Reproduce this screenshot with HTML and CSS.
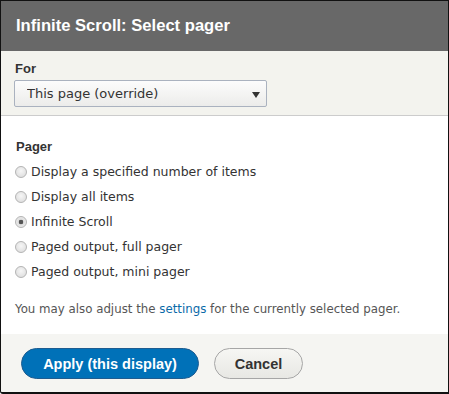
FILE: index.html
```html
<!DOCTYPE html>
<html lang="en">
<head>
    <meta charset="UTF-8">
    <meta name="viewport" content="width=device-width, initial-scale=1.0">
    <title>Infinite Scroll: Select pager</title>
    <link rel="stylesheet" href="styles.css">
</head>
<body>
    <div class="dialog">
        <div class="titlebar">Infinite Scroll: Select pager</div>

        <div class="override">
            <label for="override-for" class="field-label">For</label>
            <div class="select-wrap">
                <select id="override-for" class="select-field">
                    <option>This page (override)</option>
                    <option>All displays</option>
                </select>
                <span class="select-arrow"></span>
            </div>
        </div>

        <form class="content">
            <div class="field-label">Pager</div>
            <label class="radio-row"><input type="radio" name="pager" class="radio"> Display a specified number of items</label>
            <label class="radio-row"><input type="radio" name="pager" class="radio"> Display all items</label>
            <label class="radio-row"><input type="radio" name="pager" class="radio" checked> Infinite Scroll</label>
            <label class="radio-row"><input type="radio" name="pager" class="radio"> Paged output, full pager</label>
            <label class="radio-row"><input type="radio" name="pager" class="radio"> Paged output, mini pager</label>

            <p class="description">You may also adjust the <a href="#" class="link">settings</a> for the currently selected pager.</p>
        </form>

        <div class="buttonpane">
            <button type="button" class="button button-primary">Apply (this display)</button>
            <button type="button" class="button">Cancel</button>
        </div>
    </div>
</body>
</html>
```

FILE: styles.css
```css
body {
    margin: 0;
    font-family: "DejaVu Sans", sans-serif;
    color: #333;
}
.dialog {
    width: 449px;
    height: 394px;
    box-sizing: border-box;
    border: 1px solid #111;
    border-bottom-width: 2px;
    border-bottom-left-radius: 3px;
    display: flex;
    flex-direction: column;
    background-color: #fff;
    overflow: hidden;
}
.titlebar {
    height: 50px;
    line-height: 50px;
    padding-left: 15px;
    background-color: #686868;
    color: #fff;
    font-family: "Liberation Sans", Arial, sans-serif;
    font-weight: bold;
    font-size: 16.6px;
}
.override {
    background-color: #f3f3ee;
    border-bottom: 1px solid #ccc;
    padding: 10px 0 8px 13px;
}
.field-label {
    display: block;
    font-family: "Liberation Sans", Arial, sans-serif;
    font-weight: bold;
    font-size: 13px;
    line-height: 16px;
    color: #333;
    margin-left: 1px;
    margin-bottom: 3px;
}
.select-wrap {
    position: relative;
    width: 253px;
}
.select-field {
    appearance: none;
    -webkit-appearance: none;
    width: 253px;
    height: 27px;
    box-sizing: border-box;
    border: 1px solid #aab2bf;
    border-radius: 2px;
    background: linear-gradient(#fcfcfc, #ececea);
    padding: 0 0 0 12px;
    font-family: "DejaVu Sans", sans-serif;
    font-size: 13px;
    color: #333;
    outline: none;
}
.select-arrow {
    position: absolute;
    left: 238px;
    top: 12px;
    width: 0;
    height: 0;
    border-left: 4px solid transparent;
    border-right: 4px solid transparent;
    border-top: 6px solid #333;
    pointer-events: none;
}
.content {
    flex: 1;
    margin: 0;
    padding: 23px 0 0 14px;
}
.content .field-label {
    margin-bottom: 4px;
}
.radio-row {
    display: flex;
    align-items: center;
    height: 25px;
    font-size: 12.5px;
    color: #333;
}
.radio {
    appearance: none;
    -webkit-appearance: none;
    width: 12px;
    height: 12px;
    margin: 0 4px 0 0;
    border: 1px solid #b4b4b4;
    border-radius: 50%;
    background: radial-gradient(circle at 50% 40%, #f6f6f6, #d9d9d9);
    box-sizing: border-box;
}
.radio:checked {
    background: radial-gradient(circle, #555 0, #555 2px, #dedede 2.6px, #f2f2f2 100%);
}
.description {
    margin: 17px 0 0 0;
    font-size: 11.8px;
    line-height: 16px;
    color: #555;
}
.link {
    color: #0a6aa8;
    text-decoration: none;
}
.buttonpane {
    height: 58px;
    background-color: #f5f5f2;
    display: flex;
    align-items: flex-start;
    gap: 15px;
    padding: 14px 0 0 20px;
    box-sizing: border-box;
}
.button {
    height: 31px;
    width: 89px;
    padding: 0;
    border: 1px solid #a6a6a6;
    border-radius: 20px;
    background: linear-gradient(#f6f6f3, #e8e8e4);
    color: #333;
    font-family: "Liberation Sans", Arial, sans-serif;
    font-weight: bold;
    font-size: 14.5px;
    cursor: pointer;
}
.button-primary {
    width: 178px;
    background: #0071b8;
    border-color: #1e5c90;
    color: #fff;
}
```
